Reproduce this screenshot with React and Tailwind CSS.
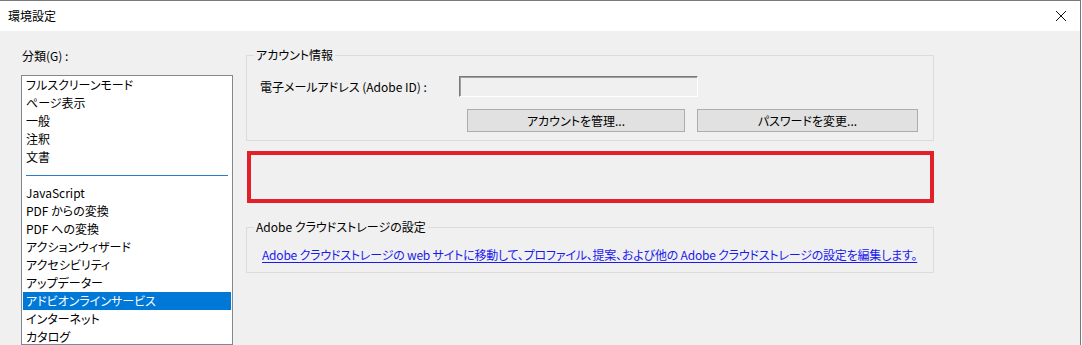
import React from 'react';

const generalItems = ['フルスクリーンモード', 'ページ表示', '一般', '注釈', '文書'];
const otherItems = [
  'JavaScript',
  'PDF からの変換',
  'PDF への変換',
  'アクションウィザード',
  'アクセシビリティ',
  'アップデーター',
  'アドビオンラインサービス',
  'インターネット',
  'カタログ',
];
const selected = 'アドビオンラインサービス';

const GroupBox = ({ title, className, children }) => (
  <fieldset className={`border border-[#dcdcdc] ${className}`}>
    <legend className="ml-[7px] px-[2px] leading-[18px]">{title}</legend>
    {children}
  </fieldset>
);

const Button = ({ children, className }) => (
  <button className={`h-[23px] bg-[#e1e1e1] border border-[#adadad] leading-[21px] text-black ${className}`}>
    {children}
  </button>
);

const App = () => {
  return (
    <div className="w-[1081px] h-[345px] overflow-hidden flex flex-col bg-[#f0f0f0] border-t border-r border-[#7a7a7a] text-[12px] text-black font-['Noto_Sans_CJK_JP','Noto_Sans',sans-serif] [font-feature-settings:'palt']">
      {/* title bar */}
      <div className="h-[30px] bg-white flex items-center justify-between pl-[8px] pr-[12px] shrink-0">
        <span className="leading-[18px]">環境設定</span>
        <svg width="12" height="12" viewBox="0 0 12 12" className="mr-[1px]">
          <path d="M1 1 L11 11 M11 1 L1 11" stroke="#111" strokeWidth="1" fill="none" />
        </svg>
      </div>

      <div className="flex flex-1 min-h-0">
        {/* category list */}
        <div className="w-[246px] shrink-0 pl-[21px] pt-[16px] flex flex-col">
          <div className="leading-[18px] pl-[1px]">分類(G) :</div>
          <div className="mt-[10px] w-[212px] flex-1 bg-white border border-[#828790] overflow-hidden">
            {generalItems.map((item) => (
              <div key={item} className="h-[18px] leading-[18px] pl-[4px]">{item}</div>
            ))}
            <div className="h-[18px] flex items-center px-[4px]">
              <div className="w-full h-[1px] bg-[#2a7bc8]" />
            </div>
            {otherItems.map((item) => (
              <div
                key={item}
                className={`h-[18px] leading-[18px] pl-[3px] ml-[1px] mr-[1px] ${item === selected ? 'bg-[#0078d7] text-white' : ''}`}
              >
                {item}
              </div>
            ))}
          </div>
        </div>

        {/* settings panel */}
        <div className="w-[688px] pt-[15px] flex flex-col">
          <GroupBox title="アカウント情報" className="pt-[12px] pb-[8px]">
            <div className="pl-[13px] pr-[14px]">
              <div className="flex items-center h-[21px]">
                <span className="w-[199px] leading-[18px]">電子メールアドレス (Adobe ID) :</span>
                <div className="w-[239px] h-[21px] border-t border-l border-[#7a7a7a] border-b border-r border-b-white border-r-white shadow-[inset_1px_1px_0_#a0a0a0]" />
              </div>
              <div className="flex mt-[12px] pl-[207px] gap-[12px]">
                <Button className="w-[218px]">アカウントを管理...</Button>
                <Button className="w-[221px]">パスワードを変更...</Button>
              </div>
            </div>
          </GroupBox>

          <div className="mt-[10px] ml-[1px] h-[52px] border-4 border-[#e3202a]" />

          <GroupBox title="Adobe クラウドストレージの設定" className="mt-[15px] pt-[10px] pb-[8px]">
            <div className="pl-[15px]">
              <a href="#" className="leading-[18px] text-[#1a1aee] underline underline-offset-2 tracking-[-0.2px]">
                Adobe クラウドストレージの web サイトに移動して、プロファイル、提案、および他の Adobe クラウドストレージの設定を編集します。
              </a>
            </div>
          </GroupBox>
        </div>
      </div>
    </div>
  );
};

export default App;
